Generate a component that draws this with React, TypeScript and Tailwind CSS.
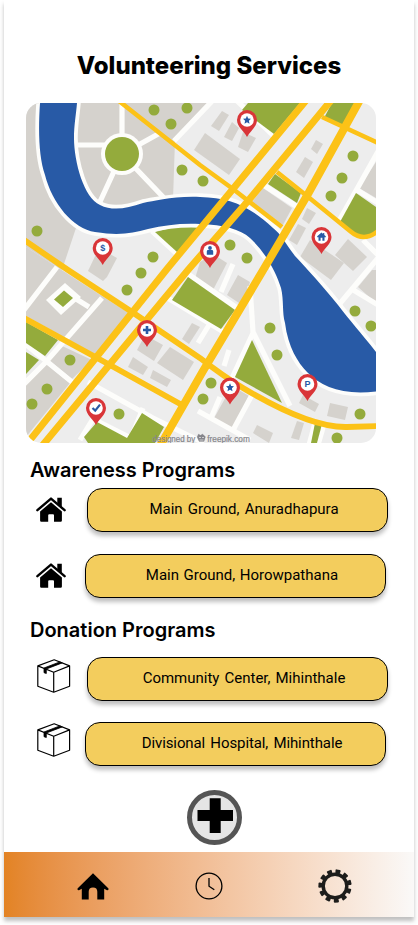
import React from "react";

const GRAY = "#d5d2cd";
const GREEN = "#94ab3c";
const YELLOW = "#fcc217";
const BLUE = "#285aa6";
const WHITE = "#fdfdfb";

const blocks = [
  "26,103 213,103 175,140 173,200 120,225 76,228 62,270 26,247",
  "26,247 130,314 98,356 26,316",
  "45,363 70,383 26,437 26,383",
  "48,359 60,345 92,360 72,379",
  "376,162 359,188 376,198",
  "376,270 372,270 358,287 376,303",
];

const buildings = [
  "222,111 229,115 219,131 211,126",
  "232,122 239,128 232,141 224,137",
  "243,132 256,138 248,152 238,147",
  "205,133 240,159 229,175 194,150",
  "316,140 323,144 317,154 311,149",
  "305,157 313,162 304,178 296,172",
  "263,188 292,208 283,225 252,202",
  "307,208 316,213 309,224 302,219",
  "298,224 306,228 297,245 289,240",
  "310,240 344,263 331,280 300,257",
  "348,239 367,257 353,271 335,255",
  "99,248 117,258 107,277 103,281 88,271",
  "200,262 213,254 227,263 212,292 194,282",
  "238,275 250,282 242,305 227,295",
  "145,335 163,345 154,361 137,350",
  "170,347 194,362 183,380 157,363",
  "133,357 148,367 143,375 128,367",
  "153,370 171,380 167,387 150,378",
  "192,323 200,327 189,344 182,339",
  "232,386 249,396 232,430 213,420",
  "257,425 273,433 269,443 253,433",
  "297,421 304,423 299,440 291,438",
  "303,395 319,404 315,412 299,403",
  "330,403 348,407 345,420 327,416",
];

const streets = [
  "M122 103V154M76 145H122M122 154L98 206M122 154L165 199M122 154L160 133",
  "M216 97L174 141M234 98L276 138M339 221L380 148M357 190L378 203",
  "M337 307L378 258M350 288L378 305M363 240L378 255",
  "M57 267L24 310M102 298L45 363L24 384M73 297L89 307",
  "M24 343L72 382M88 382L153 418L204 443M152 231L177 254",
  "M188 274L240 310M166 297L222 331M233 264L221 292",
  "M250 286L253 332L290 406M253 333L232 378M262 184L299 208",
  "M229 350L224 366M209 325L198 343M220 397L211 418M252 395L232 432M198 411L250 440",
  "M131 438L143 408M80 440L93 419L129 437M315 423L309 445M324 424L318 445",
];

const parks = [
  "248,103 300,103 274,134 242,110",
  "332,103 355,103 343,127 324,118",
  "275,174 301,193 297,203 268,184",
  "356,193 376,207 376,233 363,239 340,222",
  "155,232 175,227 200,227 177,252",
  "188,277 235,310 221,329 172,300",
  "252,340 282,403 235,377",
  "26,322 58,340 45,356 26,343",
  "26,352 39,360 26,374",
  "97,422 127,438 142,413 164,427 155,443 88,443 84,437",
  "315,423 322,424 317,443 311,443",
];

const trees = [
  [154, 110], [187, 108], [171, 124], [182, 170], [203, 181], [37, 231], [153, 257],
  [141, 273], [127, 290], [70, 360], [47, 389], [32, 404], [119, 414], [353, 156],
  [342, 178], [331, 196], [230, 245], [247, 258], [270, 328], [277, 355], [211, 383],
  [203, 399], [355, 311], [371, 326], [360, 414], [337, 438],
];

const star = (
  <path fill={BLUE} d="M0-4.2 1.2-1.5 4-1.2 1.9.8 2.5 3.7 0 2.3-2.5 3.7-1.9.8-4-1.2-1.2-1.5Z" />
);

function Pin({ x, y, children }: { x: number; y: number; children: React.ReactNode }) {
  return (
    <g transform={`translate(${x} ${y})`}>
      <path fill="#d93538" d="M0 17C-2.5 11.5-10 7-10 0A10 10 0 0 1 10 0C10 7 2.5 11.5 0 17Z" />
      <circle r="6.8" fill="#fff" />
      {children}
    </g>
  );
}

function PinLetter({ children }: { children: string }) {
  return (
    <text y="3.2" textAnchor="middle" fill={BLUE} className="font-['Liberation_Sans',sans-serif] text-[9px] font-bold">
      {children}
    </text>
  );
}

function CityMap() {
  return (
    <svg viewBox="26 103 350 340" className="block h-[340px] w-[350px] rounded-[15px]">
      <rect x="26" y="103" width="350" height="340" fill="#ededed" />
      <g fill={GRAY}>
        {blocks.map((p) => <polygon key={p} points={p} />)}
        {buildings.map((p) => <polygon key={p} points={p} />)}
      </g>
      <g fill="none" stroke={WHITE} strokeWidth="5.2">
        {streets.map((d) => <path key={d} d={d} />)}
      </g>
      <circle cx="122" cy="154" r="21" fill={WHITE} />
      <circle cx="122" cy="154" r="17" fill={GREEN} />
      <polygon points="65,283 81,297 61,315 46,300" fill={WHITE} />
      <polygon points="64,290.5 73,298 63,307 54,299.5" fill={GREEN} />
      <g fill={GREEN}>
        {parks.map((p) => <polygon key={p} points={p} />)}
      </g>
      <path
        fill={BLUE}
        stroke={WHITE}
        strokeWidth="7.5"
        paintOrder="stroke"
        d="M40 95V103C38 132 39 158 45 175C52 203 73 229 95 232C120 236 132 233 148 229C165 225 182 223 200 224C224 225 240 229 250 238C266 253 276 272 281 288C284 300 282 313 285 323C288 347 298 363 307 372C322 388 345 396 380 391V357C362 334 351 322 338 305C322 285 308 270 295 256C285 243 281 234 273 228C248 205 230 198 200 197C172 196 155 201 143 203C126 209 112 211 100 205C84 198 74 162 74 138C74 125 76 115 77 103V95Z"
      />
      <g fill={GREEN}>
        {trees.map(([x, y]) => <circle key={`${x}-${y}`} cx={x} cy={y} r="5.5" />)}
      </g>
      <g fill="none" stroke={YELLOW}>
        <path strokeWidth="4.5" d="M119 101L200 165L233 189L282 227M277 172L307 196L350 231Q364 243 378 231M322 117L378 143" />
        <path strokeWidth="5.8" d="M24 240L68 270L132 312L200 358Q223 376 243 388Q310 428 347 427L378 426M24 318L110 365L182 405" />
        <path strokeWidth="7" d="M308 98L200 229L167 269L26 445M333 98L248 201L188 270L42 446" />
        <path strokeWidth="8" d="M361 98L308 194L262 272L203 371L160 446" />
      </g>
      <Pin x={247} y={120}>{star}</Pin>
      <Pin x={321.5} y={237}>
        <path fill={BLUE} d="M0-4.5-4.3-.8V.3H-3V3.7H-.9V.8H.9V3.7H3V.3H4.3V-.8L2.8-2V-4H1.6V-3Z" />
      </Pin>
      <Pin x={210} y={251}>
        <circle cy="-3" r="1.9" fill={BLUE} />
        <path fill={BLUE} d="M-3.2 3.7V.4Q-3.2-.9-1.9-.9H1.9Q3.2-.9 3.2.4V3.7Z" />
      </Pin>
      <Pin x={147} y={330}>
        <path stroke={BLUE} strokeWidth="2.6" d="M-4 0H4M0-4V4" />
      </Pin>
      <Pin x={96} y={408}>
        <path stroke={BLUE} strokeWidth="2.2" fill="none" d="M-3.5 0-.8 2.6 4-3.4" />
      </Pin>
      <Pin x={230} y={387.5}>{star}</Pin>
      <Pin x={307.5} y={384}><PinLetter>P</PinLetter></Pin>
      <Pin x={102.7} y={248}><PinLetter>$</PinLetter></Pin>
      <g fill="#85858b" stroke="#85858b" strokeWidth=".2" className="font-['Liberation_Sans',sans-serif] text-[9px]">
        <text x="152.3" y="441.5" textLength="43" lengthAdjust="spacingAndGlyphs">designed by</text>
        <text x="207.3" y="441.5" textLength="42.5" lengthAdjust="spacingAndGlyphs">freepik.com</text>
        <path d="M197 437l1.5-3 2 1.2 2-1.2 3 2.8-1.4 4.7h-5Z" />
      </g>
      <path stroke="#ededed" strokeWidth=".7" d="M199 437.5h2M202 437.5h2M199.5 440h4" />
    </svg>
  );
}

function HouseIcon() {
  return (
    <svg viewBox="0 0 30 25" className="mb-px h-[25px] w-[30px]">
      <path fill="none" stroke="#000" strokeWidth="2.4" strokeLinecap="round" strokeLinejoin="round" d="M1.4 13.2 15 1.6 28.6 13.2" />
      <path d="M21.3.8h4.5v9.4l-4.5-3.8ZM15 5.2 25.9 14.5V23.6Q25.9 24.8 24.7 24.8H18V18.3Q18 17.2 17 17.2H13.2Q12.2 17.2 12.2 18.3V24.8H5.3Q4.1 24.8 4.1 23.6V14.5Z" />
    </svg>
  );
}

function BoxIcon() {
  return (
    <svg viewBox="0 0 34 34" className="h-[34px] w-[34px]" fill="none" stroke="#000" strokeWidth="1.2" strokeLinejoin="round">
      <path d="M.8 6.9 17.2.8 32.6 6.9V27.2L16.7 33.2.8 27.2ZM.8 6.9 16.7 13.2 32.6 6.9M16.7 13.2V33.2" />
      <path fill="#000" strokeWidth=".8" d="M22.8 2.9 25.3 3.9 9.3 10V14.5L7 13.7V9Z" />
    </svg>
  );
}

function Gear() {
  return (
    <svg viewBox="-17 -17 34 34" className="h-[34px] w-[34px]" fill="#1d1d1b">
      <circle r="11.8" fill="none" stroke="#1d1d1b" strokeWidth="3.4" />
      {Array.from({ length: 11 }, (_, i) => (
        <path key={i} transform={`rotate(${175 + (i * 360) / 11})`} d="M-2-12-2.6-15.4Q-2.7-16.6-1.7-16.6H1.7Q2.7-16.6 2.6-15.4L2-12Z" />
      ))}
    </svg>
  );
}

function Place({ children, className }: { children: string; className: string }) {
  return (
    <button
      className={`h-11 w-[301px] rounded-[15px] border border-black bg-[#f3cd5d] pb-[2px] pl-[13px] font-['Roboto',sans-serif] text-[15px] leading-none text-black shadow-[0_4px_4px_rgba(0,0,0,0.25)] ${className}`}
    >
      {children}
    </button>
  );
}

export default function App() {
  return (
    <div className="h-[925px] w-[418px] overflow-hidden bg-white px-1 text-black">
      <div className="flex h-[917px] w-[410px] flex-col bg-white shadow-[0_4px_4px_rgba(0,0,0,0.25)]">
        <h1 className="mt-[51px] h-[30px] text-center font-['Inter',sans-serif] text-[24px] leading-[30px] font-extrabold">
          Volunteering Services
        </h1>
        <div className="mt-[22px] ml-[22px]"><CityMap /></div>

        <h2 className="mt-[15px] ml-[26px] h-6 font-['Inter',sans-serif] text-[20px] leading-6 font-semibold">
          Awareness Programs
        </h2>
        <div className="mt-[6px] flex h-11 items-center pl-8">
          <HouseIcon />
          <Place className="ml-[21px] [word-spacing:1.5px]">Main Ground, Anuradhapura</Place>
        </div>
        <div className="mt-[22px] flex h-11 items-center pl-8">
          <HouseIcon />
          <Place className="ml-[19px] [word-spacing:0.8px]">Main Ground, Horowpathana</Place>
        </div>

        <h2 className="mt-[20px] ml-[26px] h-6 font-['Inter',sans-serif] text-[20px] leading-6 font-semibold">
          Donation Programs
        </h2>
        <div className="mt-[15px] flex h-11 pl-[33px]">
          <div className="pt-[2px]"><BoxIcon /></div>
          <Place className="ml-4 [word-spacing:1.3px]">Community Center, Mihinthale</Place>
        </div>
        <div className="mt-[21px] flex h-11 pl-[33px]">
          <div className="pt-px"><BoxIcon /></div>
          <Place className="ml-[14px] tracking-[-0.1px] [word-spacing:1.6px]">Divisional Hospital, Mihinthale</Place>
        </div>

        <button aria-label="Add" className="mt-6 ml-[183px] size-[55px]">
          <svg viewBox="0 0 55 55" className="size-[55px]">
            <circle cx="27.5" cy="27.5" r="25" fill="#e5e5e5" stroke="#555" strokeWidth="5" />
            <path stroke="#000" strokeWidth="11" d="M10.5 25.5H46M28.2 8.3V43" />
          </svg>
        </button>

        <nav className="mt-[7px] flex h-[65px] items-center bg-linear-to-r from-[#e38323] to-[#faf9f8] pt-[3px]">
          <svg viewBox="0 0 32 27" className="ml-[73px] h-[27px] w-8">
            <path d="M16 .3 31.5 15.6Q32 17.5 30 17.2L27.2 15.8V26.5H20.3V18.8Q20.3 14.5 16 14.5T11.7 18.8V26.5H4.8V15.8L2 17.2Q0 17.5.5 15.6Z" />
          </svg>
          <svg viewBox="0 0 28 28" className="ml-[86px] size-7" fill="none" stroke="#000" strokeWidth="1.3">
            <circle cx="14" cy="14" r="12.9" />
            <path d="M14 6V14.2L19.3 17.8" />
          </svg>
          <div className="ml-[95px]"><Gear /></div>
        </nav>
      </div>
    </div>
  );
}
